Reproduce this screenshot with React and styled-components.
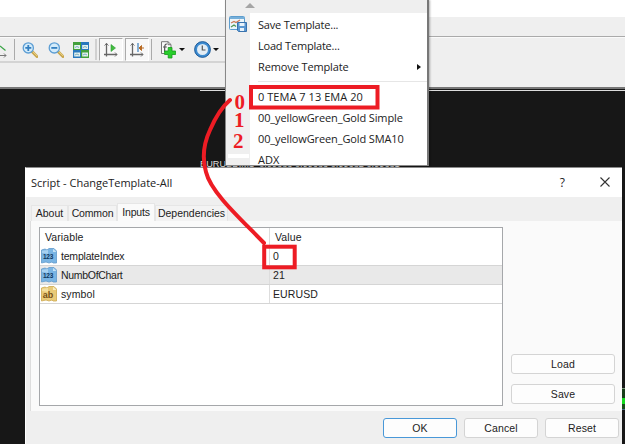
import styled, { createGlobalStyle } from "styled-components";

const GlobalStyle = createGlobalStyle`
    * {
        box-sizing: border-box;
    }
    body {
        margin: 0;
        overflow: hidden;
        font-family: "Liberation Sans", Arial, sans-serif;
    }
`

const ZoomIcon = ({ plus }) => (
    <svg width="16" height="16" viewBox="0 0 16 16">
        <path d="M10 9.5L15 14.5" stroke="#c9a64c" strokeWidth="3" strokeLinecap="round" />
        <path d="M10.4 9.3L15 13.8" stroke="#ecd48c" strokeWidth="1" />
        <circle cx="6.3" cy="5.9" r="5.1" fill="#d3ebfa" stroke="#5d9ed4" strokeWidth="1.3" />
        <path d={plus ? "M3.3 5.9H9.3M6.3 2.9V8.9" : "M3.3 5.9H9.3"} stroke="#337fc0" strokeWidth="1.8" />
    </svg>
)

const TileIcon = () => (
    <svg width="16" height="16" viewBox="0 0 16 16">
        <path d="M0 0H8V8H0ZM8 8H16V16H8Z" fill="#42a03c" />
        <path d="M8 0H16V8H8ZM0 8H8V16H0Z" fill="#2878bd" />
        <path d="M1.2 3H7V7H1.2ZM9.2 3H15V7H9.2ZM1.2 10.5H7V14.5H1.2ZM9.2 10.5H15V14.5H9.2Z" fill="#e4f1ee" />
        <path d="M2 5.5L4 4.5L6 5.5M10 5.5L12 4.5L14 5.5M2 13L4 12L6 13M10 13L12 12L14 13" fill="none" stroke="#79aec0" />
    </svg>
)

const AxisIcon = ({ shift }) => (
    <svg width="14" height="14" viewBox="0 0 14 14">
        <path d="M2.5 0V13.5M0 11.5H13" stroke="#666" strokeWidth="1.3" fill="none" />
        <path d="M.5 2.5L2.5 .5L4.5 2.5M11 9.5L13 11.5L11 13.5" stroke="#777" fill="none" />
        {shift ? (
            <g>
                <path d="M8 0V9" stroke="#4b87bf" strokeWidth="1.3" />
                <path d="M14 5H10M11.5 2.5L9 5L11.5 7.5Z" stroke="#b86b25" fill="#b86b25" />
            </g>
        ) : (
            <path d="M7 1.5L11.5 5L7 8.5Z" fill="#43bd40" stroke="#2a9b30" strokeWidth=".6" />
        )}
    </svg>
)

const IndicatorIcon = () => (
    <svg width="16" height="18" viewBox="0 0 16 18">
        <path d="M1.5 .7H8L11 3.5V12.5H1.5Z" fill="#f9f9f9" stroke="#777" />
        <path d="M8 .7V3.7H11" fill="none" stroke="#777" />
        <path d="M6.8 3.2C4.7 2.8 4.7 4 4.6 11M3 6H6.8" fill="none" stroke="#555" strokeWidth="1.2" />
        <path d="M8.2 6.5H12V10H15.6V13.5H12V17H8.2V13.5H4.6V10H8.2Z" fill="#28ce2b" stroke="#159b1b" strokeWidth=".8" />
    </svg>
)

const ClockIcon = () => (
    <svg width="17" height="17" viewBox="0 0 17 17">
        <circle cx="8.5" cy="8.5" r="6.8" fill="#e3edf5" stroke="#3d8bd0" strokeWidth="2.6" />
        <circle cx="8.5" cy="8.5" r="7.9" fill="none" stroke="#164f8b" strokeWidth=".8" />
        <path d="M8.3 4.5V9H11.5" fill="none" stroke="#555" strokeWidth="1.2" />
    </svg>
)

const TemplateIcon = () => (
    <svg width="18" height="16" viewBox="0 0 18 16">
        <rect x=".5" y=".5" width="15" height="13" rx="1" fill="#edf6fb" stroke="#5d9dce" />
        <path d="M1 1H15.5V3H1Z" fill="#76afd9" />
        <path d="M2 7L5 5.5L7 6.5L11 4" fill="none" stroke="#cf7855" strokeWidth="1.2" />
        <path d="M2 11L5 9L7 10.5" fill="none" stroke="#519554" strokeWidth="1.3" />
        <path d="M8.5 6.5H17.5V15.5H9.5L8.5 14.5Z" fill="#5b97d1" stroke="#3872ad" />
        <path d="M10.5 7H15.5V10H10.5ZM11 12H15V15H11Z" fill="#e8f2fa" />
    </svg>
)

const TypeIcon = ({ text }) => (
    <svg width="16" height="16" viewBox="0 0 16 16">
        <path
            d="M.5 2L4 1L6 2L8 .5H13L15.5 3V15H12L11 14L8 15L5 14L.5 15Z"
            fill={text ? "#e9ca78" : "#79b4e3"}
            stroke={text ? "#cda84e" : "#629bcc"}
            strokeWidth=".8"
        />
        <path d="M1 2.8L7 2V6L1 5Z" fill={text ? "#f4df9f" : "#a7d1f0"} />
        <path d="M12 .7V4H15.5Z" fill={text ? "#f9edc3" : "#c3e0f5"} />
        <text
            x="7" y={text ? "11.6" : "11"} textAnchor="middle"
            fontFamily="Liberation Sans" fontWeight="bold"
            fontSize={text ? "9" : "6.5"} fill={text ? "#765016" : "#10375e"}
        >
            {text ? "ab" : "123"}
        </text>
    </svg>
)

const variables = [
    { name: "templateIndex", value: "0", spacing: "-.2px" },
    { name: "NumbOfChart", value: "21", spacing: "-.3px", selected: true },
    { name: "symbol", value: "EURUSD", spacing: ".1px", text: true },
]

const TemplateMenu = () => (
    <StyledMenu>
        <StyledMenuScroll><StyledUpArrow /></StyledMenuScroll>
        <StyledMenuBody>
            <StyledGutter><TemplateIcon /><StyledGutterMark /></StyledGutter>
            <StyledMenuList>
                <StyledMenuItem $spacing="-.2px">Save Template...</StyledMenuItem>
                <StyledMenuItem $spacing="-.2px">Load Template...</StyledMenuItem>
                <StyledMenuItem $spacing="-.12px">Remove Template<StyledSubArrow /></StyledMenuItem>
                <StyledDivider />
                <StyledMenuItem $spacing=".05px">0 TEMA 7 13 EMA 20</StyledMenuItem>
                <StyledMenuItem $spacing="-.12px">00_yellowGreen_Gold Simple</StyledMenuItem>
                <StyledMenuItem $spacing="-.12px">00_yellowGreen_Gold SMA10</StyledMenuItem>
                <StyledMenuItem>ADX</StyledMenuItem>
            </StyledMenuList>
        </StyledMenuBody>
    </StyledMenu>
)

const ScriptDialog = () => (
    <StyledDialog>
        <StyledTitleBar>
            <StyledTitle>Script - ChangeTemplate-All</StyledTitle>
            <StyledHelp>?</StyledHelp>
            <svg width="10" height="10" viewBox="0 0 10 10">
                <path d="M.5 .5L9.5 9.5M9.5 .5L.5 9.5" stroke="#333" strokeWidth="1.1" />
            </svg>
        </StyledTitleBar>
        <StyledTabs>
            <StyledTab $width={37}>About</StyledTab>
            <StyledTab $width={49} $spacing="-.15px">Common</StyledTab>
            <StyledTab $width={38} $spacing="-.2px" $active>Inputs</StyledTab>
            <StyledTab $width={73}>Dependencies</StyledTab>
        </StyledTabs>
        <StyledPanel>
            <StyledTable>
                <StyledTableRow $head>
                    <StyledName>Variable</StyledName>
                    <StyledValue $head>Value</StyledValue>
                </StyledTableRow>
                {variables.map((item) => (
                    <StyledTableRow key={item.name} $selected={item.selected}>
                        <StyledName $icon $spacing={item.spacing}>
                            <TypeIcon text={item.text} />{item.name}
                        </StyledName>
                        <StyledValue>{item.value}</StyledValue>
                    </StyledTableRow>
                ))}
            </StyledTable>
            <StyledSide>
                <StyledButton $width={104}>Load</StyledButton>
                <StyledButton $width={104}>Save</StyledButton>
            </StyledSide>
        </StyledPanel>
        <StyledFooter>
            <StyledButton $primary>OK</StyledButton>
            <StyledButton>Cancel</StyledButton>
            <StyledButton>Reset</StyledButton>
        </StyledFooter>
    </StyledDialog>
)

const App = () => {

    return (
        <StyledScreen>
            <GlobalStyle />
            <StyledCaption />
            <StyledMenuStrip />
            <StyledToolbarRow>
                <StyledToolbar>
                    <StyledCut>
                        <svg width="7" height="13" viewBox="0 0 7 13">
                            <path d="M0 1L5.5 5.5" stroke="#38a444" strokeWidth="1.2" />
                            <path d="M0 10.5H6M4 8.5L6 10.5L4 12.5" fill="none" stroke="#777" />
                        </svg>
                    </StyledCut>
                    <StyledSeparator />
                    <StyledZoomGroup>
                        <ZoomIcon plus />
                        <ZoomIcon />
                        <TileIcon />
                    </StyledZoomGroup>
                    <StyledSeparator $wide />
                    <StyledPressed><AxisIcon /></StyledPressed>
                    <StyledPressed><AxisIcon shift /></StyledPressed>
                    <StyledSeparator />
                    <StyledDropTool><IndicatorIcon /><StyledDownArrow /></StyledDropTool>
                    <StyledDropTool><ClockIcon /><StyledDownArrow /></StyledDropTool>
                </StyledToolbar>
            </StyledToolbarRow>
            <StyledLowerStrip />
            <StyledChart>
                <StyledChartLine />
                <StyledPrice>EURUSD,M1&nbsp; 0.99683 0.99683 0.99682 0.99681</StyledPrice>
                <StyledCandle />
            </StyledChart>
            <TemplateMenu />
            <ScriptDialog />
            <StyledNotes width="625" height="444" viewBox="0 0 625 444">
                <rect x="251" y="87" width="126.5" height="20.5" />
                <rect x="264.2" y="246.7" width="30.5" height="20.6" />
                <path d="M230 100C223 106 216 116 210 130C203 145 202 158 206 172C211 193 243 221 264 243" />
                <text x="234.5" y="109">0</text>
                <text x="234" y="126.5">1</text>
                <text x="233" y="148">2</text>
            </StyledNotes>
        </StyledScreen>
    )
}

const StyledScreen = styled.div `
    position: relative;
    display: flex;
    flex-direction: column;
    width: 625px;
    height: 444px;
    overflow: hidden;
    background: #171717;
`

const StyledCaption = styled.div `
    height: 17px;
    background: #fff;
`

const StyledMenuStrip = styled.div `
    height: 20px;
    background: #efefef;
    border-bottom: 1px solid #aaa;
`

const StyledToolbarRow = styled.div `
    height: 26px;
    background: #efefef;
    border-top: 1px solid #fafafa;
`

const StyledToolbar = styled.div `
    display: flex;
    align-items: center;
    width: 226px;
    height: 25px;
    border-bottom: 2px solid #d4d4d4;
`

const StyledCut = styled.div `
    width: 14px;
    height: 13px;
    padding-top: 1px;
`

const StyledSeparator = styled.div `
    width: ${({ $wide }) => ($wide ? "2px" : "1px")};
    height: 21px;
    margin-right: ${({ $wide }) => ($wide ? "2px" : "0")};
    background: ${({ $wide }) => ($wide ? "#d0d0d0" : "#aaa")};
`

const StyledZoomGroup = styled.div `
    display: flex;
    align-items: center;
    justify-content: space-between;
    width: 80px;
    padding: 0 6px 0 7px;
`

const StyledPressed = styled.div `
    display: flex;
    align-items: center;
    justify-content: center;
    width: 24px;
    height: 23px;
    margin-right: 2px;
    background: #f8f8f8;
    border: 1px solid #fff;
    border-top-color: #aaa;
    border-left-color: #aaa;
`

const StyledDropTool = styled.div `
    display: flex;
    align-items: center;
    justify-content: space-between;
    width: 25px;
    margin-left: 8px;
    & + & {
        margin-left: 9px;
    }
`

const StyledDownArrow = styled.span `
    border: 3px solid transparent;
    border-top-color: #111;
    border-bottom: 0;
`

const StyledLowerStrip = styled.div `
    height: 26px;
    background: #efefef;
    border-bottom: 2px solid #777;
`

const StyledChart = styled.div `
    position: relative;
    display: flex;
    flex: 1;
    flex-direction: column;
    background: #171717;
`

const StyledChartLine = styled.div `
    height: 1px;
    margin: 1px 0 0 200px;
    background: #ddd;
`

const StyledPrice = styled.div `
    position: absolute;
    left: 200px;
    top: 69px;
    color: #ddd;
    font-size: 9.2px;
    line-height: 12px;
    white-space: nowrap;
`

const StyledCandle = styled.div `
    position: absolute;
    right: 0;
    top: 299px;
    width: 3px;
    height: 22px;
    background: linear-gradient(#173c19 45%, #15db20 45% 75%, #174b1b 75%);
    border-top: 1px solid #779477;
    border-bottom: 1px solid #48698c;
`

const StyledMenu = styled.div `
    position: absolute;
    left: 225px;
    top: 0;
    width: 204px;
    height: 166px;
    overflow: hidden;
    background: #fff;
    border: 1px solid #888;
    border-top: 0;
    border-right: 2px solid #777;
    box-shadow: 1px 0 2px rgba(0, 0, 0, .3);
`

const StyledMenuScroll = styled.div `
    height: 13px;
    padding: 3px 0 0 19px;
    background: #efefef;
`

const StyledUpArrow = styled.div `
    width: 10px;
    height: 5px;
    background: #a5a5a5;
    clip-path: polygon(50% 0, 100% 100%, 0 100%);
`

const StyledMenuBody = styled.div `
    display: flex;
`

const StyledGutter = styled.div `
    display: flex;
    flex-direction: column;
    justify-content: space-between;
    width: 24px;
    height: 152px;
    padding: 3px 1px 7px 3px;
    background: #efefef;
`

const StyledGutterMark = styled.div `
    height: 4px;
    margin-left: -1px;
    background: #fff;
`

const StyledMenuList = styled.div `
    flex: 1;
    padding-top: 1px;
`

const StyledMenuItem = styled.div `
    display: flex;
    align-items: center;
    justify-content: space-between;
    height: 21px;
    padding: 0 6px 0 8px;
    color: #222;
    font-family: "Open Sans", "Noto Sans", sans-serif;
    font-size: 11px;
    letter-spacing: ${({ $spacing }) => $spacing || "0"};
    white-space: nowrap;
`

const StyledSubArrow = styled.span `
    border: 3px solid transparent;
    border-left: 4px solid #111;
    border-right: 0;
`

const StyledDivider = styled.div `
    height: 1px;
    margin: 4px 0 4px 8px;
    background: #e6e6e6;
`

const StyledDialog = styled.div `
    position: absolute;
    left: 25px;
    top: 167px;
    display: flex;
    flex-direction: column;
    width: 597px;
    height: 277px;
    background: #efefef;
    border-top: 1px solid #8b8b8b;
    border-left: 1px solid #fff;
`

const StyledTitleBar = styled.div `
    display: flex;
    align-items: center;
    height: 29px;
    padding: 0 12px 1px 5px;
    background: #fff;
    font-family: "Open Sans", "Noto Sans", sans-serif;
    color: #222;
`

const StyledTitle = styled.div `
    flex: 1;
    font-size: 11px;
`

const StyledHelp = styled.span `
    margin-right: 35px;
    font-size: 12px;
`

const StyledTabs = styled.div `
    display: flex;
    align-items: flex-end;
    height: 24px;
    padding-left: 5px;
`

const StyledTab = styled.div `
    display: flex;
    align-items: center;
    justify-content: center;
    width: ${({ $width }) => $width}px;
    height: ${({ $active }) => ($active ? "18px" : "16px")};
    padding-bottom: 2px;
    background: ${({ $active }) => ($active ? "#fafafa" : "#f3f3f3")};
    border: 1px solid #e6e6e6;
    border-bottom: 0;
    color: #222;
    font-size: 10.5px;
    letter-spacing: ${({ $spacing }) => $spacing || "0"};
    white-space: nowrap;
`

const StyledPanel = styled.div `
    display: flex;
    height: 190px;
    margin-left: 4px;
    padding: 6px 7px 5px 8px;
    background: #fafafa;
    border-left: 1px solid #ddd;
`

const StyledTable = styled.div `
    width: 464px;
    height: 179px;
    background: #fff;
    border: 1px solid #a5a7aa;
`

const StyledTableRow = styled.div `
    display: flex;
    height: 19px;
    color: #222;
    font-size: 10.5px;
    letter-spacing: .1px;
    background: ${({ $selected }) => ($selected ? "#e9e9e9" : "#fff")};
    border-bottom: 1px solid ${({ $head }) => ($head ? "#fff" : "#d5d5d5")};
`

const StyledName = styled.div `
    display: flex;
    align-items: center;
    gap: 4px;
    width: 230px;
    padding-left: ${({ $icon }) => ($icon ? "1px" : "5px")};
    letter-spacing: ${({ $spacing }) => $spacing || ".1px"};
    border-right: 1px solid #ddd;
`

const StyledValue = styled.div `
    display: flex;
    align-items: center;
    padding-left: ${({ $head }) => ($head ? "5px" : "3px")};
`

const StyledSide = styled.div `
    display: flex;
    flex: 1;
    flex-direction: column;
    justify-content: flex-end;
    align-items: flex-end;
    gap: 10px;
    padding-bottom: 2px;
`

const StyledButton = styled.button `
    width: ${({ $width }) => $width || 74}px;
    height: 20px;
    padding: 0 0 1px;
    color: #222;
    background: #fdfdfd;
    border: 1px solid ${({ $primary }) => ($primary ? "#4998d8" : "#d4d4d4")};
    border-radius: 3px;
    font-family: "Liberation Sans", Arial, sans-serif;
    font-size: 10.5px;
    letter-spacing: .1px;
`

const StyledFooter = styled.div `
    display: flex;
    justify-content: flex-end;
    gap: 7px;
    padding: 7px 3px 0 0;
`

const StyledNotes = styled.svg `
    position: absolute;
    left: 0;
    top: 0;
    fill: none;
    stroke: #ed1c24;
    stroke-width: 4;
    stroke-linecap: round;
    text {
        fill: #ed1c24;
        stroke: none;
        font: bold 21px "Liberation Serif", serif;
    }
`

export default App;
